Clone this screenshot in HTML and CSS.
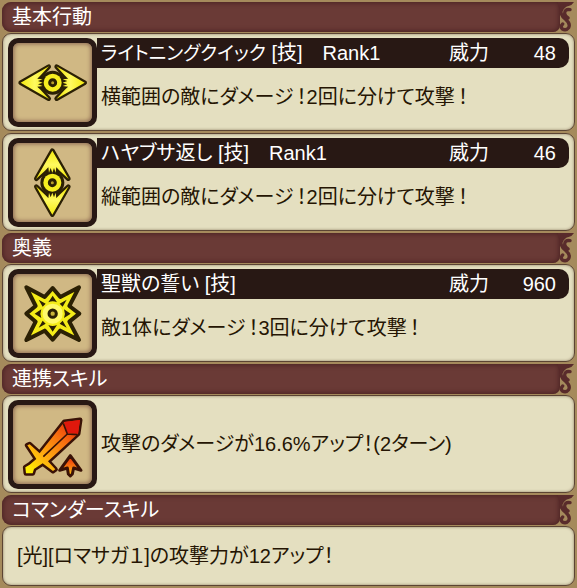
FILE: index.html
```html
<!DOCTYPE html>
<html lang="ja">
<head>
<meta charset="utf-8">
<meta name="viewport" content="width=device-width, initial-scale=1">
<title>スキル</title>
<link rel="stylesheet" href="styles.css">
</head>
<body>
<svg class="defs" aria-hidden="true">
  <defs>
    <linearGradient id="wing" x1="0" x2="1"><stop offset="0" stop-color="#f4ea10"/><stop offset=".5" stop-color="#fffa60"/><stop offset="1" stop-color="#f0e400"/></linearGradient>
    <linearGradient id="fire" gradientUnits="userSpaceOnUse" x1="85" y1="240" x2="230" y2="85"><stop offset="0" stop-color="#fff200"/><stop offset=".3" stop-color="#ffb010"/><stop offset=".65" stop-color="#f87010"/><stop offset="1" stop-color="#e02008"/></linearGradient>
    <linearGradient id="rise" x1="0" y1="0" x2="0" y2="1"><stop offset="0" stop-color="#e82808"/><stop offset=".5" stop-color="#f87010"/><stop offset="1" stop-color="#ffd010"/></linearGradient>
    <symbol id="eye" viewBox="39 39 237 237">
      <circle cx="158" cy="158" r="36" fill="#2b2004"/>
      <g stroke="#2b2004" stroke-width="14" stroke-linejoin="round">
        <path d="M62 158 L146 110 L122 136 L122 180 L146 206 Z"/>
        <path d="M254 158 L170 110 L194 136 L194 180 L170 206 Z"/>
      </g>
      <g fill="url(#wing)">
        <path d="M62 158 L147 109 L122 136 L112 146 L128 148 L114 153 L128 158 L114 163 L128 168 L112 170 L122 180 L147 207 Z"/>
        <path transform="rotate(180 158 158)" d="M62 158 L147 109 L122 136 L112 146 L128 148 L114 153 L128 158 L114 163 L128 168 L112 170 L122 180 L147 207 Z"/>
      </g>
      <circle cx="158" cy="158" r="27" fill="#f6ee20"/>
      <circle cx="158" cy="158" r="9" fill="#b8a028" stroke="#2b2004" stroke-width="9"/>
    </symbol>
    <symbol id="star" viewBox="39 42 237 237">
      <path fill="#f4ec18" stroke="#2b2004" stroke-width="12" stroke-linejoin="round" d="M79 82 L134 111 L158 84 L181 111 L237 82 L208 138 L238 161 L208 185 L237 240 L181 212 L158 239 L134 212 L79 240 L107 185 L79 161 L107 138Z"/>
      <path fill="#2b2004" d="M158 107 L171 127 Q158 121 145 127ZM158 215 L171 195 Q158 201 145 195ZM104 161 L124 148 Q119 161 124 174ZM212 161 L192 148 Q197 161 192 174ZM116 119 L137 131 L128 140ZM200 119 L179 131 L188 140ZM116 203 L137 191 L128 182ZM200 203 L179 191 L188 182Z"/>
      <circle cx="158" cy="161" r="30" fill="#fff96a"/>
      <circle cx="158" cy="161" r="11" fill="#c8b438" stroke="#2b2004" stroke-width="9"/>
    </symbol>
    <symbol id="sword" viewBox="39 39 237 237">
      <path fill="#3a1206" stroke="#3a1206" stroke-width="15" stroke-linejoin="round" d="M193 90 L240 84 L234 125 L144 208 L166 232 L159 237 L128 214 L102 231 L98 244 L78 244 L76 226 L89 218 L109 201 L82 160 L89 157 L119 184Z"/>
      <path fill="url(#fire)" d="M193 90 L240 84 L234 125 L144 208 L166 232 L159 237 L128 214 L102 231 L98 244 L78 244 L76 226 L89 218 L109 201 L82 160 L89 157 L119 184Z"/>
      <path fill="#e0180c" d="M193 90 L240 84 L234 125 L201 124Z"/>
      <path fill="none" stroke="#3a1206" stroke-width="5" d="M190 94 L202 126 L232 128M202 126 L130 194"/>
      <path fill="url(#rise)" stroke="#3a1206" stroke-width="9" stroke-linejoin="round" d="M211 191 L243 235 L221 228 L217 246 L211 252 L205 246 L202 228 L179 235Z"/>
    </symbol>
    <symbol id="curl" viewBox="0 0 48 90">
      <path fill="#592b2b" d="M0 0H48Q42 10 32 12Q20 14 14 28L6 34Q6 16 0 12Z"/>
      <path fill="none" stroke="#592b2b" stroke-width="10" stroke-linecap="round" d="M12 12Q6 24 10 36Q13 45 24 53Q38 65 32 77Q24 87 13 81Q6 74 14 66M36 23Q20 20 20 34Q21 42 30 48"/>
    </symbol>
  </defs>
</svg>
<main class="skills">
  <section class="group">
    <h2 class="heading"><span class="band">基本行動</span><svg class="curl" aria-hidden="true"><use href="#curl"/></svg></h2>
    <article class="card">
      <div class="tile"><svg class="icon" aria-hidden="true"><use href="#eye"/></svg></div>
      <div class="info">
        <h3 class="bar"><span class="name"><span class="long">ライトニングクイック</span> [技]　Rank1</span><span class="label">威力</span><span class="power">48</span></h3>
        <p class="text">横範囲の敵にダメージ<span class="mark">！</span>2回に分けて攻撃<span class="mark">！</span></p>
      </div>
    </article>
    <article class="card">
      <div class="tile"><svg class="icon upright" aria-hidden="true"><use href="#eye"/></svg></div>
      <div class="info">
        <h3 class="bar"><span class="name">ハヤブサ返し [技]　Rank1</span><span class="label">威力</span><span class="power">46</span></h3>
        <p class="text">縦範囲の敵にダメージ<span class="mark">！</span>2回に分けて攻撃<span class="mark">！</span></p>
      </div>
    </article>
  </section>
  <section class="group">
    <h2 class="heading"><span class="band">奥義</span><svg class="curl" aria-hidden="true"><use href="#curl"/></svg></h2>
    <article class="card">
      <div class="tile"><svg class="icon" aria-hidden="true"><use href="#star"/></svg></div>
      <div class="info">
        <h3 class="bar"><span class="name">聖獣の誓い [技]</span><span class="label">威力</span><span class="power">960</span></h3>
        <p class="text">敵1体にダメージ<span class="mark">！</span>3回に分けて攻撃<span class="mark">！</span></p>
      </div>
    </article>
  </section>
  <section class="group">
    <h2 class="heading"><span class="band">連携スキル</span><svg class="curl" aria-hidden="true"><use href="#curl"/></svg></h2>
    <article class="card">
      <div class="tile"><svg class="icon" aria-hidden="true"><use href="#sword"/></svg></div>
      <div class="info">
        <p class="text">攻撃のダメージが16.6%アップ！(2ターン)</p>
      </div>
    </article>
  </section>
  <section class="group">
    <h2 class="heading"><span class="band">コマンダースキル</span><svg class="curl" aria-hidden="true"><use href="#curl"/></svg></h2>
    <article class="card plain">
      <p class="text">[光][ロマサガ１]の攻撃力が12アップ！</p>
    </article>
  </section>
</main>
</body>
</html>
```
FILE: styles.css
```css
* { box-sizing: border-box; }
body {
  margin: 0;
  background: #a58a5c;
  color: #251503;
  font-family: "Liberation Sans", "Noto Sans CJK JP", sans-serif;
  font-size: 20px;
  line-height: 30px;
  font-feature-settings: "palt";
}
h2, h3, p { margin: 0; font-size: inherit; font-weight: normal; }
.defs { position: absolute; width: 0; height: 0; }
.skills { display: flex; flex-direction: column; gap: 2px; padding: 2px; }
.group { display: flex; flex-direction: column; gap: 2px; }
.heading { display: flex; height: 30px; margin-bottom: -1px; color: #fff; }
.band {
  flex: 1;
  padding-left: 10px;
  background: #6a3a36;
  border-radius: 9px 0 7px 9px;
  box-shadow: inset 0 0 5px 1px #4a2222;
}
.curl { width: 16px; height: 30px; margin-left: -2px; margin-right: 1px; }
.card {
  display: flex;
  height: 98px;
  padding: 4px 5px;
  background: #e4dfc0;
  border: 1px solid #5b4433;
  border-radius: 9px;
  box-shadow: inset 0 0 3px #8d7d62;
}
.tile {
  flex: none;
  width: 89px;
  height: 89px;
  padding: 5px;
  background: #281814;
  border-radius: 10px;
}
.icon {
  display: block;
  width: 79px;
  height: 79px;
  border-radius: 6px;
  background: #d0b884;
  box-shadow: inset 0 0 4px 1px #8a6650;
}
.upright { transform: rotate(90deg); }
.info { flex: 1; display: flex; flex-direction: column; min-width: 0; }
.bar {
  display: flex;
  height: 30px;
  padding: 0 13px 0 4px;
  background: #281814;
  border-radius: 0 10px 10px 0;
  color: #fff;
  white-space: nowrap;
}
.name { flex: 1; }
.long { font-size: 19px; }
.power { width: 67px; text-align: right; }
.text { margin: auto 0; padding-left: 4px; white-space: nowrap; }
.mark { padding-left: 3px; }
.plain { height: 60px; padding: 0 10px; }
```
